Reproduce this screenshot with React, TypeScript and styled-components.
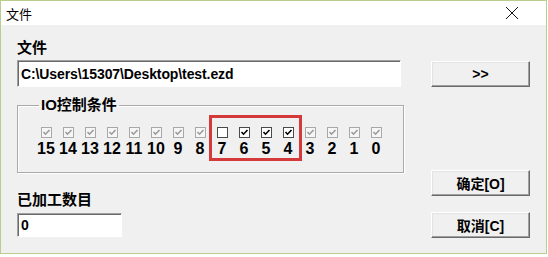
import React from 'react'
import styled, { createGlobalStyle } from 'styled-components'

const GlobalStyle = createGlobalStyle`
  html, body {
    margin: 0;
    padding: 0;
    background: #ffffff;
  }
  * {
    box-sizing: border-box;
  }
`

const FONT = `"Liberation Sans", "Noto Sans CJK SC", sans-serif`

const Window = styled.div`
  width: 547px;
  height: 254px;
  border: 1px solid #b8cf8c;
  background: #f0f0f0;
  display: flex;
  flex-direction: column;
  font-family: ${FONT};
  color: #000;
`

const TitleBar = styled.div`
  height: 24px;
  flex: none;
  background: #ffffff;
  display: flex;
  align-items: center;
  justify-content: space-between;
  padding: 0 27px 0 5px;
  font-size: 13px;
`

const Body = styled.div`
  display: flex;
  gap: 27px;
  padding: 0 16px;
`

const LeftCol = styled.div`
  width: 387px;
  display: flex;
  flex-direction: column;
`

const RightCol = styled.div`
  width: 99px;
  display: flex;
  flex-direction: column;
`

const Label = styled.div<{ $top: number }>`
  margin-top: ${(p) => p.$top}px;
  font-size: 15px;
  font-weight: bold;
  line-height: 18px;
  height: 18px;
`

const TextBox = styled.input<{ $top: number; $width: number; $height: number }>`
  margin-top: ${(p) => p.$top}px;
  width: ${(p) => p.$width}px;
  height: ${(p) => p.$height}px;
  border: 1px solid;
  border-color: #a0a0a0 #ffffff #ffffff #a0a0a0;
  box-shadow: inset 1px 1px 0 #696969;
  background: #ffffff;
  padding: 0 0 0 3px;
  font-family: ${FONT};
  font-size: 14px;
  font-weight: bold;
  letter-spacing: -0.1px;
  color: #000;
  outline: none;
`

const Group = styled.fieldset`
  position: relative;
  margin: 10px 0 0 0;
  min-width: 0;
  height: 76px;
  border: 1px solid #a9a9a9;
  box-shadow: inset 1px 1px 0 #ffffff, 1px 1px 0 #ffffff;
  padding: 14px 0 0 17px;
`

const Legend = styled.legend`
  margin-left: 4px;
  padding: 0 2px;
  font-size: 15px;
  font-weight: bold;
  line-height: 16px;
`

const BitRow = styled.div`
  display: flex;
`

const Highlight = styled.div`
  display: flex;
  position: relative;

  &::after {
    content: '';
    position: absolute;
    left: -2px;
    right: -3px;
    top: -12px;
    bottom: -5px;
    border: 3px solid #d43a3a;
  }
`

const Cell = styled.div`
  width: 22px;
  display: flex;
  flex-direction: column;
  align-items: center;
  gap: 3px;
`

const Box = styled.span<{ $state: 'off' | 'on' | 'disabled' }>`
  width: 11px;
  height: 11px;
  display: flex;
  align-items: center;
  justify-content: center;
  border: 1px solid ${(p) => (p.$state === 'disabled' ? '#a8a8a8' : '#4a4a4a')};
  background: ${(p) => (p.$state === 'disabled' ? '#f6f6f6' : '#ffffff')};
  color: ${(p) => (p.$state === 'disabled' ? '#9a9a9a' : '#000000')};
`

const Num = styled.span`
  font-size: 16px;
  font-weight: bold;
  line-height: 15px;
`

const Button = styled.button<{ $top: number }>`
  margin-top: ${(p) => p.$top}px;
  width: 99px;
  height: 26px;
  padding: 0;
  background: #f0f0f0;
  border: 1px solid;
  border-color: #ffffff #696969 #696969 #ffffff;
  box-shadow: inset -1px -1px 0 #a0a0a0, inset 1px 1px 0 #e3e3e3;
  font-family: ${FONT};
  font-size: 14px;
  font-weight: bold;
  color: #000;
`

function Check({ state }: { state: 'off' | 'on' | 'disabled' }) {
  return (
    <Box $state={state}>
      {state !== 'off' && (
        <svg width="9" height="9" viewBox="0 0 9 9">
          <path d="M1.5 4 L3.5 6.2 L7.5 2" fill="none" stroke="currentColor" strokeWidth="1.6" />
        </svg>
      )}
    </Box>
  )
}

function Bit({ n, state }: { n: number; state: 'off' | 'on' | 'disabled' }) {
  return (
    <Cell>
      <Check state={state} />
      <Num>{n}</Num>
    </Cell>
  )
}

function App() {
  const high = [15, 14, 13, 12, 11, 10, 9, 8]
  const mid: { n: number; state: 'off' | 'on' }[] = [
    { n: 7, state: 'off' },
    { n: 6, state: 'on' },
    { n: 5, state: 'on' },
    { n: 4, state: 'on' },
  ]
  const low = [3, 2, 1, 0]

  return (
    <>
      <GlobalStyle />
      <Window>
        <TitleBar>
          <span>文件</span>
          <svg width="14" height="14" viewBox="0 0 14 14">
            <path d="M1 1 L13 13 M13 1 L1 13" stroke="#111" strokeWidth="1" />
          </svg>
        </TitleBar>
        <Body>
          <LeftCol>
            <Label $top={14}>文件</Label>
            <TextBox $top={3} $width={384} $height={27} readOnly value="C:\Users\15307\Desktop\test.ezd" />
            <Group>
              <Legend>IO控制条件</Legend>
              <BitRow>
                {high.map((n) => (
                  <Bit key={n} n={n} state="disabled" />
                ))}
                <Highlight>
                  {mid.map((b) => (
                    <Bit key={b.n} n={b.n} state={b.state} />
                  ))}
                </Highlight>
                {low.map((n) => (
                  <Bit key={n} n={n} state="disabled" />
                ))}
              </BitRow>
            </Group>
            <Label $top={18}>已加工数目</Label>
            <TextBox $top={4} $width={105} $height={24} readOnly value="0" />
          </LeftCol>
          <RightCol>
            <Button $top={36}>&gt;&gt;</Button>
            <Button $top={83}>确定[O]</Button>
            <Button $top={16}>取消[C]</Button>
          </RightCol>
        </Body>
      </Window>
    </>
  )
}

export default App
